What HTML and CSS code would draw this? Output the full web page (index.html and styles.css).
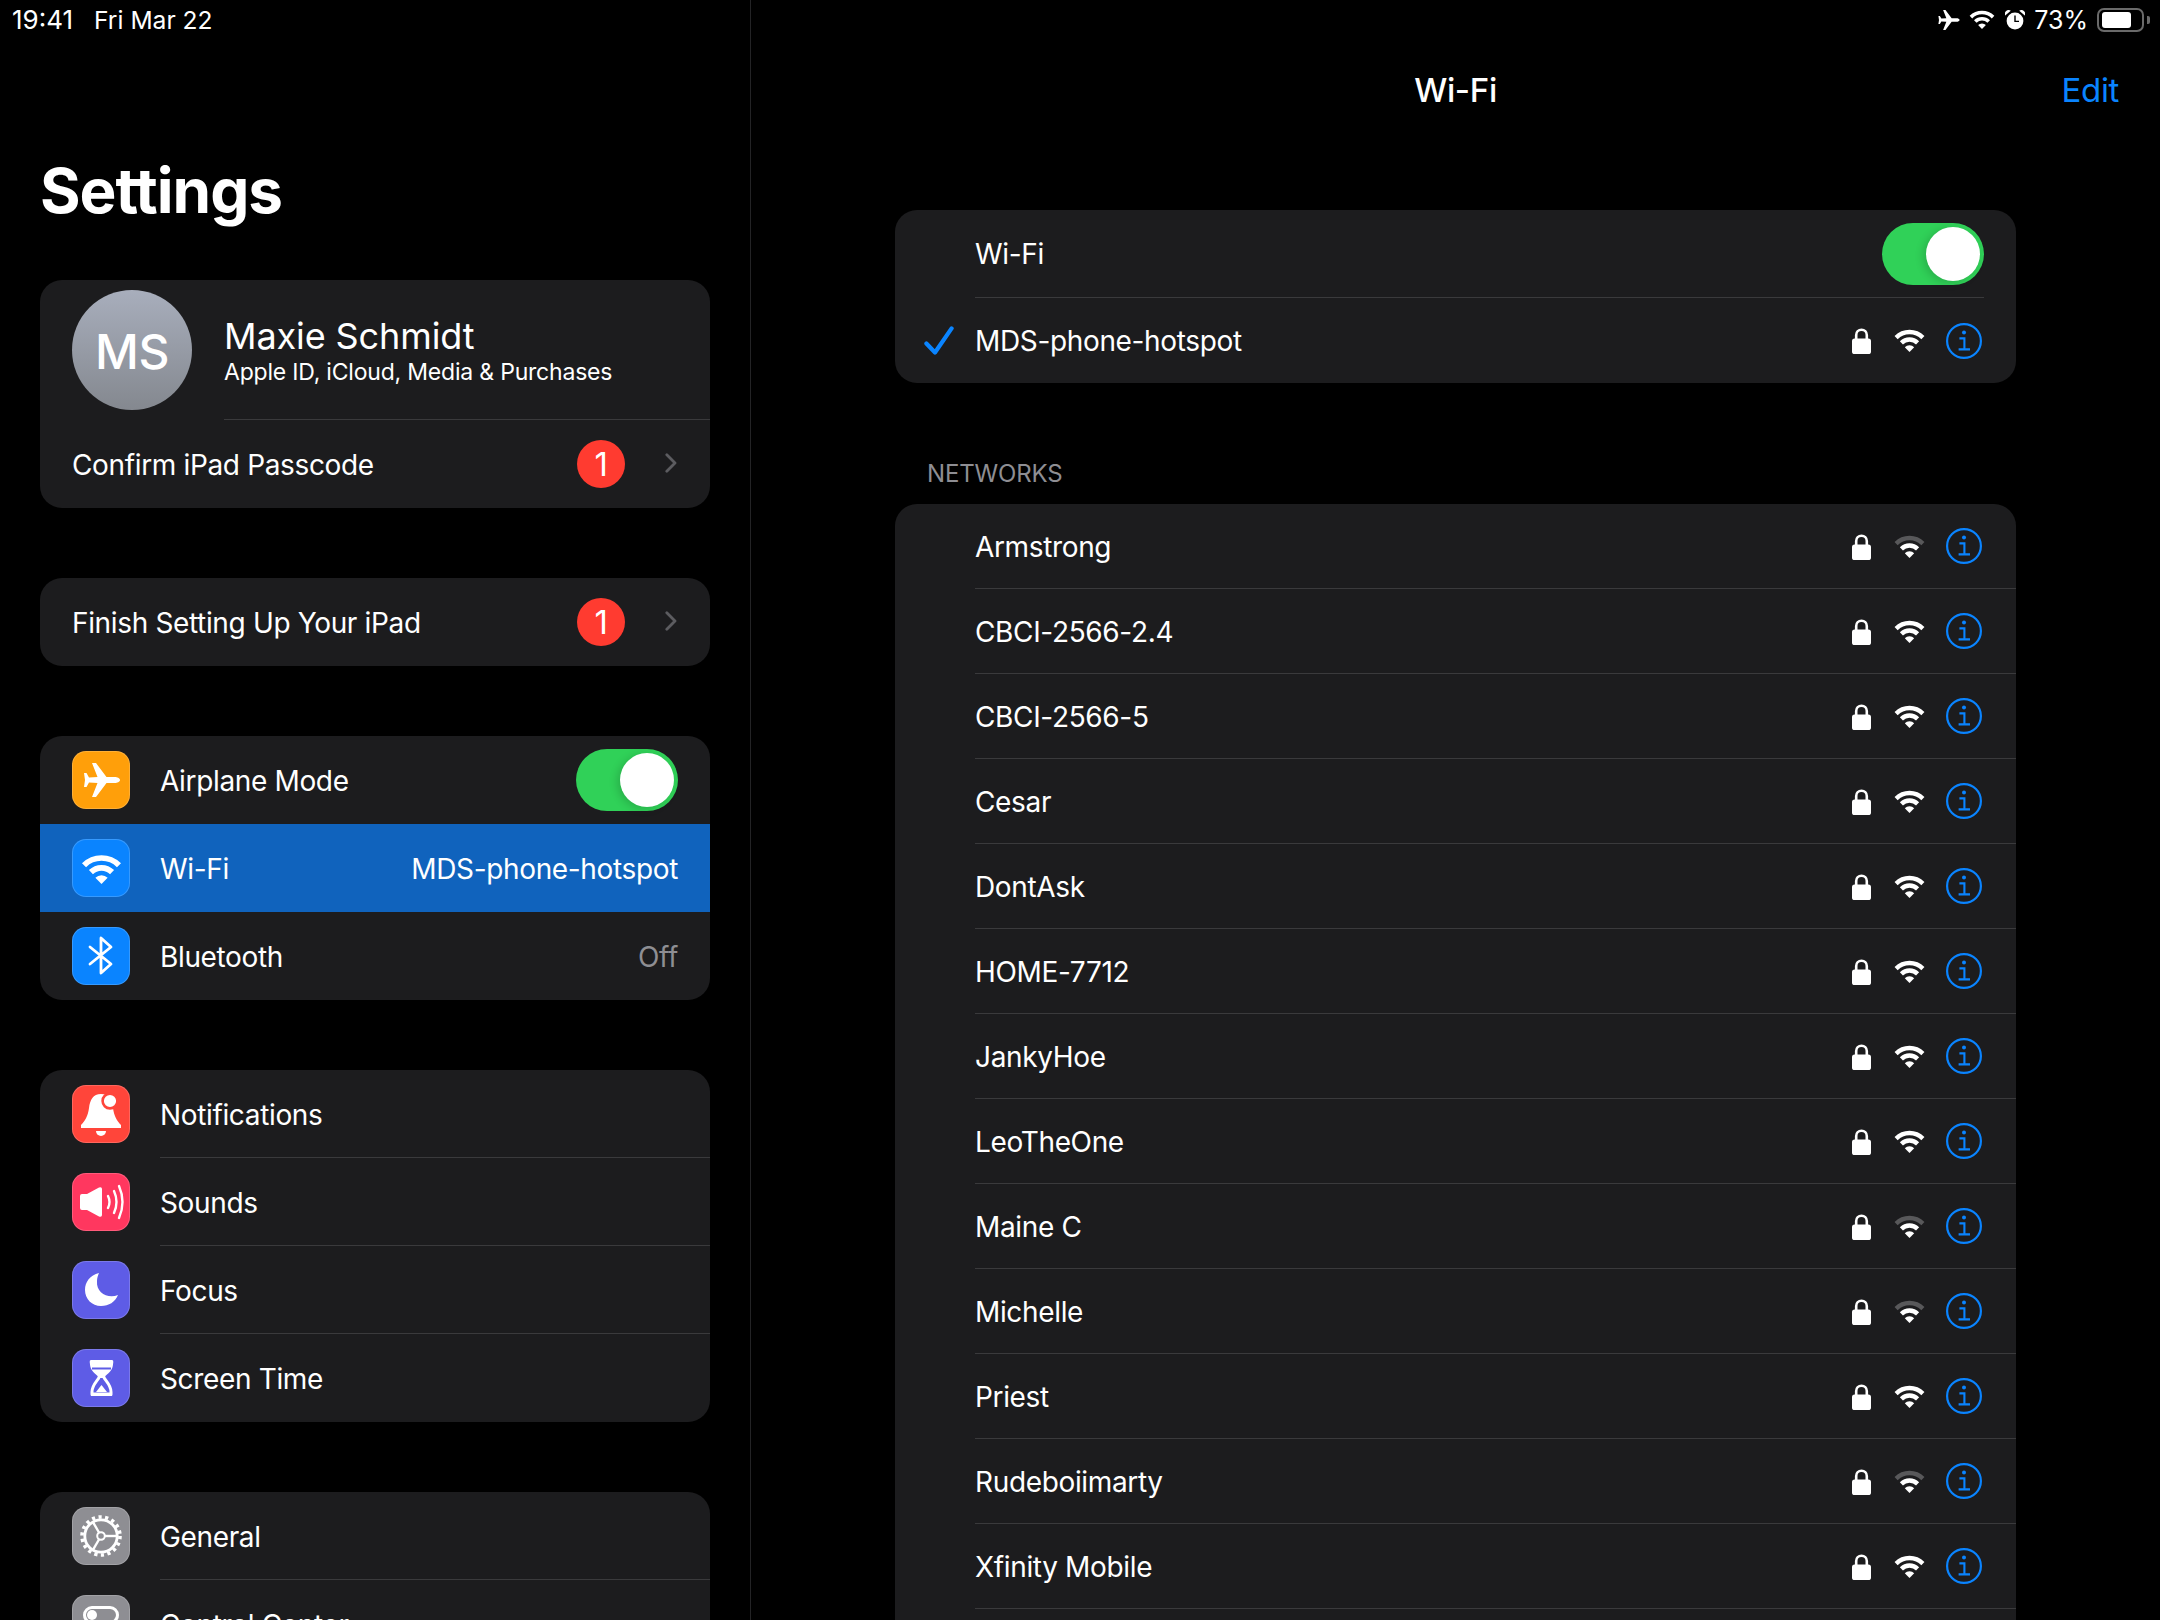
FILE: index.html
```html
<!DOCTYPE html>
<html lang="en">
<head>
<meta charset="utf-8">
<title>Settings – Wi-Fi</title>
<link rel="stylesheet" href="styles.css">
</head>
<body>
<svg class="sprite" aria-hidden="true">
  <symbol id="plane" viewBox="0 0 36 34"><path fill="currentColor" d="M36 17C36 15 33 14 31 14H22.5L12 0H8L13.5 14 5 14.4 2.5 10H0L1 17 0 24H2.5L5 19.6 13.5 20 8 34H12L22.5 20H31C33 20 36 19 36 17Z"/></symbol>
  <symbol id="wifi" viewBox="0 0 31 23"><g fill="none" stroke="currentColor" stroke-width="4.4"><path d="M2.1 8.6A19 19 0 0 1 28.9 8.6"/><path d="M7.4 13.9A11.5 11.5 0 0 1 23.6 13.9"/></g><path fill="currentColor" d="M15.5 23L10.8 18.3A6.6 6.6 0 0 1 20.2 18.3Z"/></symbol>
  <symbol id="wifi-weak" viewBox="0 0 31 23"><g fill="none" stroke-width="4.4"><path stroke="#58585a" d="M2.1 8.6A19 19 0 0 1 28.9 8.6"/><path stroke="currentColor" d="M7.4 13.9A11.5 11.5 0 0 1 23.6 13.9"/></g><path fill="currentColor" d="M15.5 23L10.8 18.3A6.6 6.6 0 0 1 20.2 18.3Z"/></symbol>
  <symbol id="lock" viewBox="0 0 19 27"><path fill="none" stroke="currentColor" stroke-width="2.6" d="M4.2 13V8A5.3 5.3 0 0 1 14.8 8V13"/><rect y="11.5" width="19" height="15.5" rx="2.6" fill="currentColor"/></symbol>
  <symbol id="info" viewBox="0 0 36 36"><circle cx="18" cy="18" r="16.9" fill="none" stroke="currentColor" stroke-width="2.2"/><circle cx="18" cy="9.6" r="2" fill="currentColor"/><path fill="none" stroke="currentColor" stroke-width="2.1" d="M13.4 15.4H18.4V26.4M12.6 26.4H24"/></symbol>
  <symbol id="check" viewBox="0 0 30 29"><path fill="none" stroke="currentColor" stroke-width="4.2" stroke-linecap="round" stroke-linejoin="round" d="M2.4 17.5L11 26.5 27.6 2.4"/></symbol>
  <symbol id="chev" viewBox="0 0 12 20"><path fill="none" stroke="currentColor" stroke-width="2.8" stroke-linecap="round" stroke-linejoin="round" d="M1.8 1.8L10 10 1.8 18.2"/></symbol>
  <symbol id="bt" viewBox="0 0 58 58"><path fill="none" stroke="#fff" stroke-width="2.8" stroke-linejoin="round" stroke-linecap="round" d="M18 20L39 37 29 46V11L39 20 18 37"/></symbol>
  <symbol id="bell" viewBox="0 0 58 58"><path fill="#fff" d="M29 9C21 9 18 15 17 23 16 31 13 36 9 40V43H49V40C45 36 42 31 41 23 40 15 37 9 29 9Z"/><path fill="#fff" d="M24 46H34A5 5 0 0 1 24 46Z"/><circle cx="38" cy="16" r="7.4" fill="#fff" stroke="#ff453a" stroke-width="2.6"/></symbol>
  <symbol id="sound" viewBox="0 0 58 58"><path fill="#fff" d="M8 23Q8 21 10 21H15L27 14.5Q30 13.5 30 16V42Q30 44.5 27 43.5L15 37H10Q8 37 8 35Z"/><g fill="none" stroke="#fff" stroke-width="2.4" stroke-linecap="round"><path d="M36 23Q39 29 36 35"/><path d="M42 18Q47 29 42 40"/><path d="M47 13Q54 29 47 45"/></g></symbol>
  <symbol id="moon" viewBox="0 0 58 58"><path fill="#fff" d="M27 12C18 14 13 21 13 29 13 38 20 45 29 45 37 45 43 41 46 34 36 38 24 32 25 20 25 17 26 14 27 12Z"/></symbol>
  <symbol id="glass" viewBox="0 0 58 58"><path fill="#fff" d="M19 11H40Q41.5 11 41.3 13L40.8 17C40 23 33 26 32 29H27C26 26 19 23 18.2 17L17.7 13Q17.5 11 19 11Z"/><path fill="none" stroke="#fff" stroke-width="3" stroke-linejoin="round" d="M27.5 27C27 31 20 35 20 43V45.5H39V43C39 35 32 31 31.5 27"/><path fill="#5e5ce6" d="M20 18.5H39V20.5H20Z"/><path fill="#fff" d="M24 43L29.5 36 35 43Z"/><path fill="#fff" d="M19 43.5H40V47H19Z"/></symbol>
  <symbol id="gear" viewBox="0 0 58 58"><circle cx="29" cy="29" r="19" fill="none" stroke="#fff" stroke-width="3.6" stroke-dasharray="3.2 3.45"/><circle cx="29" cy="29" r="16.2" fill="none" stroke="#fff" stroke-width="2.8"/><g stroke="#fff" stroke-width="2.4"><path d="M33 29H46"/><path d="M27 25.5L20.5 14.3"/><path d="M27 32.5L20.5 43.7"/></g><circle cx="29" cy="29" r="3.8" fill="none" stroke="#fff" stroke-width="2"/></symbol>
  <symbol id="cc" viewBox="0 0 58 58"><rect x="12.5" y="12.5" width="33" height="15" rx="7.5" fill="none" stroke="#fff" stroke-width="3"/><circle cx="20" cy="20" r="5" fill="#fff"/></symbol>
  <symbol id="alarm" viewBox="0 0 20 20"><circle cx="10" cy="11" r="8.4" fill="#fff"/><path fill="#fff" d="M0.2 5.6A3.8 3.8 0 0 1 5.8 0.8ZM19.8 5.6A3.8 3.8 0 0 0 14.2 0.8Z"/><path fill="none" stroke="#000" stroke-width="1.4" d="M10 5.6V11.4H14"/></symbol>
</svg>

<div class="status">
  <div class="status-left"><span class="st-time">19:41</span><span>Fri Mar 22</span></div>
  <div class="status-right">
    <svg class="st-plane"><use href="#plane"/></svg>
    <svg class="st-wifi"><use href="#wifi"/></svg>
    <svg class="st-alarm"><use href="#alarm"/></svg>
    <span class="st-pct">73%</span>
    <div class="battery"><div class="battery-fill"></div></div>
    <div class="battery-nub"></div>
  </div>
</div>

<div class="app">
  <aside class="sidebar">
    <h1 class="title">Settings</h1>

    <section class="card">
      <div class="profile">
        <div class="avatar">MS</div>
        <div class="profile-text">
          <div class="profile-name">Maxie Schmidt</div>
          <div class="profile-sub">Apple ID, iCloud, Media &amp; Purchases</div>
        </div>
      </div>
      <div class="row-plain">
        <span class="grow">Confirm iPad Passcode</span>
        <span class="badge">1</span>
        <svg class="chev"><use href="#chev"/></svg>
      </div>
    </section>

    <section class="card">
      <div class="row-plain">
        <span class="grow">Finish Setting Up Your iPad</span>
        <span class="badge">1</span>
        <svg class="chev"><use href="#chev"/></svg>
      </div>
    </section>

    <section class="card">
      <div class="row">
        <div class="ic ic-orange"><svg class="plane-glyph"><use href="#plane"/></svg></div>
        <div class="row-body flat"><span class="grow">Airplane Mode</span><div class="toggle"><div class="knob"></div></div></div>
      </div>
      <div class="row selected">
        <div class="ic ic-blue"><svg class="wifi-glyph"><use href="#wifi"/></svg></div>
        <div class="row-body flat"><span class="grow">Wi-Fi</span><span>MDS-phone-hotspot</span></div>
      </div>
      <div class="row">
        <div class="ic ic-blue"><svg class="glyph"><use href="#bt"/></svg></div>
        <div class="row-body flat"><span class="grow">Bluetooth</span><span class="muted">Off</span></div>
      </div>
    </section>

    <section class="card">
      <div class="row">
        <div class="ic ic-red"><svg class="glyph"><use href="#bell"/></svg></div>
        <div class="row-body"><span class="grow">Notifications</span></div>
      </div>
      <div class="row">
        <div class="ic ic-pink"><svg class="glyph"><use href="#sound"/></svg></div>
        <div class="row-body"><span class="grow">Sounds</span></div>
      </div>
      <div class="row">
        <div class="ic ic-indigo"><svg class="glyph"><use href="#moon"/></svg></div>
        <div class="row-body"><span class="grow">Focus</span></div>
      </div>
      <div class="row">
        <div class="ic ic-indigo"><svg class="glyph"><use href="#glass"/></svg></div>
        <div class="row-body flat"><span class="grow">Screen Time</span></div>
      </div>
    </section>

    <section class="card">
      <div class="row">
        <div class="ic ic-gray"><svg class="glyph"><use href="#gear"/></svg></div>
        <div class="row-body"><span class="grow">General</span></div>
      </div>
      <div class="row">
        <div class="ic ic-gray"><svg class="glyph"><use href="#cc"/></svg></div>
        <div class="row-body"><span class="grow">Control Center</span></div>
      </div>
    </section>
  </aside>

  <main class="detail">
    <header class="nav">
      <div class="nav-title">Wi-Fi</div>
      <div class="nav-edit">Edit</div>
    </header>

    <section class="card-wide">
      <div class="net net-tall">
        <div class="net-body net-body-switch"><span class="grow">Wi-Fi</span><div class="toggle"><div class="knob"></div></div></div>
      </div>
      <div class="net">
        <svg class="check"><use href="#check"/></svg>
        <div class="net-body flat"><span class="grow">MDS-phone-hotspot</span>
          <svg class="lock"><use href="#lock"/></svg><svg class="wifi"><use href="#wifi"/></svg><svg class="info"><use href="#info"/></svg></div>
      </div>
    </section>

    <div class="section-label">NETWORKS</div>

    <section class="card-wide card-fill">
      <div class="net"><div class="net-body"><span class="grow">Armstrong</span><svg class="lock"><use href="#lock"/></svg><svg class="wifi"><use href="#wifi-weak"/></svg><svg class="info"><use href="#info"/></svg></div></div>
      <div class="net"><div class="net-body"><span class="grow">CBCI-2566-2.4</span><svg class="lock"><use href="#lock"/></svg><svg class="wifi"><use href="#wifi"/></svg><svg class="info"><use href="#info"/></svg></div></div>
      <div class="net"><div class="net-body"><span class="grow">CBCI-2566-5</span><svg class="lock"><use href="#lock"/></svg><svg class="wifi"><use href="#wifi"/></svg><svg class="info"><use href="#info"/></svg></div></div>
      <div class="net"><div class="net-body"><span class="grow">Cesar</span><svg class="lock"><use href="#lock"/></svg><svg class="wifi"><use href="#wifi"/></svg><svg class="info"><use href="#info"/></svg></div></div>
      <div class="net"><div class="net-body"><span class="grow">DontAsk</span><svg class="lock"><use href="#lock"/></svg><svg class="wifi"><use href="#wifi"/></svg><svg class="info"><use href="#info"/></svg></div></div>
      <div class="net"><div class="net-body"><span class="grow">HOME-7712</span><svg class="lock"><use href="#lock"/></svg><svg class="wifi"><use href="#wifi"/></svg><svg class="info"><use href="#info"/></svg></div></div>
      <div class="net"><div class="net-body"><span class="grow">JankyHoe</span><svg class="lock"><use href="#lock"/></svg><svg class="wifi"><use href="#wifi"/></svg><svg class="info"><use href="#info"/></svg></div></div>
      <div class="net"><div class="net-body"><span class="grow">LeoTheOne</span><svg class="lock"><use href="#lock"/></svg><svg class="wifi"><use href="#wifi"/></svg><svg class="info"><use href="#info"/></svg></div></div>
      <div class="net"><div class="net-body"><span class="grow">Maine C</span><svg class="lock"><use href="#lock"/></svg><svg class="wifi"><use href="#wifi-weak"/></svg><svg class="info"><use href="#info"/></svg></div></div>
      <div class="net"><div class="net-body"><span class="grow">Michelle</span><svg class="lock"><use href="#lock"/></svg><svg class="wifi"><use href="#wifi-weak"/></svg><svg class="info"><use href="#info"/></svg></div></div>
      <div class="net"><div class="net-body"><span class="grow">Priest</span><svg class="lock"><use href="#lock"/></svg><svg class="wifi"><use href="#wifi"/></svg><svg class="info"><use href="#info"/></svg></div></div>
      <div class="net"><div class="net-body"><span class="grow">Rudeboiimarty</span><svg class="lock"><use href="#lock"/></svg><svg class="wifi"><use href="#wifi-weak"/></svg><svg class="info"><use href="#info"/></svg></div></div>
      <div class="net"><div class="net-body"><span class="grow">Xfinity Mobile</span><svg class="lock"><use href="#lock"/></svg><svg class="wifi"><use href="#wifi"/></svg><svg class="info"><use href="#info"/></svg></div></div>
    </section>
  </main>
</div>
</body>
</html>
```

FILE: styles.css
```css
* { box-sizing: border-box; }
html, body { margin: 0; padding: 0; background: #000; }
body {
  position: relative;
  width: 2160px;
  height: 1620px;
  overflow: hidden;
  color: #fff;
  font-family: Inter, "Liberation Sans", sans-serif;
  font-size: 28px;
  letter-spacing: -0.35px;
}
.sprite { position: absolute; width: 0; height: 0; }
svg { display: block; flex: none; }
.grow { flex: 1; min-width: 0; }
.muted { color: #8e8e93; }

/* status bar */
.status {
  position: absolute;
  top: 0; left: 0; right: 0;
  height: 40px;
  padding: 0 10px 1px 12px;
  display: flex;
  align-items: center;
  justify-content: space-between;
  font-size: 24.6px;
  letter-spacing: 0;
}
.status-left { display: flex; gap: 21px; align-items: baseline; }
.st-time { font-size: 26px; }
.status-right { display: flex; align-items: center; }
.st-plane { width: 22px; height: 20px; margin-right: 9px; }
.st-wifi { width: 26px; height: 19px; margin-right: 10px; }
.st-alarm { width: 20px; height: 20px; margin-right: 9px; }
.st-pct { margin-right: 9px; font-size: 25px; }
.battery {
  width: 47px; height: 24px;
  padding: 2px 3px;
  border: 2px solid #6a6a6a;
  border-radius: 7px;
}
.battery-fill { width: 29px; height: 16px; background: #fff; border-radius: 3px; }
.battery-nub { width: 3px; height: 8px; margin-left: 3px; background: #6a6a6a; border-radius: 0 2px 2px 0; }

/* shell */
.app { display: flex; height: 1620px; }
.sidebar {
  width: 751px;
  flex: none;
  padding: 150px 40px 0;
  border-right: 1px solid #232325;
  overflow: hidden;
}
.title {
  margin: 0 0 50px;
  font-size: 62px;
  line-height: 81px;
  font-weight: 700;
  letter-spacing: -1px;
  height: 80px;
}
.card {
  width: 670px;
  margin-bottom: 70px;
  background: #1c1c1e;
  border-radius: 22px;
  overflow: hidden;
}

/* profile */
.profile { height: 140px; padding: 10px 0 0 32px; display: flex; }
.avatar {
  width: 120px; height: 120px;
  border-radius: 50%;
  background: linear-gradient(#a8aebc, #84888f);
  font-size: 48px;
  font-weight: 500;
  letter-spacing: -0.5px;
  padding-top: 2px;
  display: flex; align-items: center; justify-content: center;
}
.profile-text {
  flex: 1;
  margin-left: 32px;
  height: 130px;
  padding-top: 24px;
  border-bottom: 1px solid #3a3a3c;
}
.profile-name { font-size: 36px; line-height: 44px; letter-spacing: -0.1px; }
.profile-sub { font-size: 23px; line-height: 29px; letter-spacing: -0.2px; }

/* rows */
.row-plain { height: 88px; padding: 0 33px 0 32px; display: flex; align-items: center; }
.row-plain .grow { padding-top: 2px; }
.badge {
  width: 48px; height: 48px;
  border-radius: 50%;
  background: #ff3b30;
  font-size: 33px;
  display: flex; align-items: center; justify-content: center;
}
.chev { width: 12px; height: 20px; margin: -2px 0 0 40px; color: #5c5c60; }
.row { height: 88px; padding-left: 32px; display: flex; align-items: center; }
.row.selected { background: #1063bd; }
.row-body {
  flex: 1;
  height: 100%;
  margin-left: 30px;
  padding: 2px 32px 0 0;
  display: flex;
  align-items: center;
  border-bottom: 1px solid #3a3a3c;
}
.flat { border-bottom: none; }
.ic {
  width: 58px; height: 58px;
  flex: none;
  border-radius: 14px;
  display: flex; align-items: center; justify-content: center;
  box-shadow: inset 0 0 0 1px rgba(255,255,255,.18);
}
.ic-orange { background: #ff9f0a; }
.ic-blue { background: #0a84ff; }
.ic-red { background: #ff453a; }
.ic-pink { background: #ff375f; }
.ic-indigo { background: #5e5ce6; }
.ic-gray { background: #8e8e93; }
.glyph { width: 58px; height: 58px; }
.plane-glyph { width: 36px; height: 34px; margin-left: 2px; }
.wifi-glyph { width: 41px; height: 30px; margin-top: 1px; }

.toggle {
  width: 102px; height: 62px;
  padding: 4px;
  border-radius: 31px;
  background: #30d158;
  display: flex;
  justify-content: flex-end;
}
.row-body .toggle { margin-top: -2px; }
.knob { width: 54px; height: 54px; border-radius: 50%; background: #fff; box-shadow: -3px 2px 8px rgba(0,0,0,.16); }

/* detail */
.detail {
  flex: 1;
  min-width: 0;
  height: 1620px;
  padding: 0 144px;
  display: flex;
  flex-direction: column;
}
.nav { position: relative; height: 210px; flex: none; }
.nav-title {
  padding-top: 70px;
  line-height: 40px;
  text-align: center;
  font-size: 33px;
  font-weight: 500;
}
.nav-edit {
  position: absolute;
  top: 70px; right: -103px;
  line-height: 40px;
  font-size: 33px;
  color: #0a84ff;
}
.card-wide { flex: none; background: #1c1c1e; border-radius: 22px; overflow: hidden; }
.card-fill { flex: 1; border-radius: 22px 22px 0 0; }
.card-fill .grow { padding-top: 2px; }
.section-label {
  flex: none;
  height: 121px;
  padding: 76px 0 0 32px;
  line-height: 30px;
  font-size: 24px;
  letter-spacing: -0.15px;
  color: #8e8e93;
}
.net { position: relative; height: 85px; padding-left: 80px; display: flex; }
.net-tall { height: 88px; }
.net-body {
  flex: 1;
  height: 100%;
  padding-right: 34px;
  display: flex;
  align-items: center;
  border-bottom: 1px solid #3a3a3c;
}
.net-body.flat { border-bottom: none; }
.net-body-switch { margin-right: 32px; padding-right: 0; }
.check { position: absolute; left: 29px; top: 28px; width: 30px; height: 29px; color: #0a84ff; }
.lock { width: 19px; height: 27px; margin-right: 23px; }
.wifi { width: 31px; height: 23px; margin-right: 21px; }
.info { width: 36px; height: 36px; color: #0a84ff; }
```
